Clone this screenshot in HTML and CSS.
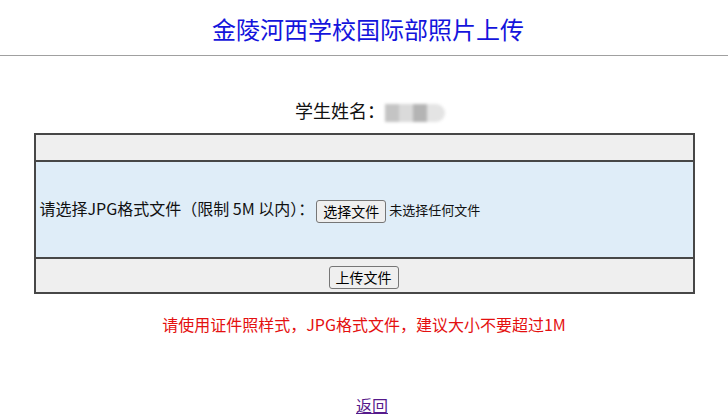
FILE: index.html
```html
<!DOCTYPE html>
<html>
  <head>
    <meta charset="utf-8">
    <title>金陵河西学校国际部照片上传</title>
    <link rel="stylesheet" href="styles.css">
  </head>
  <body>
    <h1 class="title">金陵河西学校国际部照片上传</h1>
    <hr class="rule">
    <p class="student">学生姓名：<span class="blur-name"><i></i><i></i><i></i><i></i></span></p>
    <form class="upload">
      <table class="upload-table">
        <tr class="row-gray"><td class="empty"></td></tr>
        <tr class="row-blue">
          <td class="pick">
            请选择JPG格式文件（限制 5M 以内）：<button type="button" class="btn">选择文件</button><span class="none">未选择任何文件</span>
          </td>
        </tr>
        <tr class="row-gray">
          <td class="submit"><button type="button" class="btn">上传文件</button></td>
        </tr>
      </table>
    </form>
    <p class="hint">请使用证件照样式，JPG格式文件，建议大小不要超过1M</p>
    <p class="back"><a href="#">返回</a></p>
  </body>
</html>
```

FILE: styles.css
```css
body {
  margin: 0;
  font-family: "Noto Sans CJK SC", "Liberation Sans", sans-serif;
  color: #111;
  background: #fff;
}

.title {
  margin: 0;
  padding: 13px 0 0 8px;
  height: 32px;
  line-height: 32px;
  font-size: 24px;
  font-weight: normal;
  text-align: center;
  color: #1414dc;
}

.rule {
  margin: 10px 0 0;
  border: 0;
  border-top: 1px solid #a0a0a0;
  height: 0;
}

.student {
  margin: 42px 0 0;
  height: 24px;
  line-height: 24px;
  font-size: 18px;
  text-align: center;
  padding-left: 12px;
}

.blur-name {
  display: inline-flex;
  vertical-align: middle;
  height: 18px;
  filter: blur(1.5px);
}

.blur-name i {
  display: block;
  width: 14px;
  height: 18px;
  background: #c4c4c4;
}

.blur-name i:nth-child(2) { background: #dadada; }
.blur-name i:nth-child(3) { background: #b4b4b4; }
.blur-name i:nth-child(4) { background: #e4e4e4; width: 18px; border-radius: 0 9px 9px 0; }

.upload {
  margin: 11px 0 0;
}

.upload-table {
  width: 661px;
  margin: 0 auto;
  border-collapse: collapse;
  border: 2px solid #474747;
}

.upload-table td {
  border: 2px solid #474747;
  padding: 0 4px;
  font-size: 16px;
}

.row-gray td {
  background: #efefef;
}

.row-blue td {
  background: #dfedf8;
}

.empty {
  height: 25px;
}

.pick {
  height: 95px;
}

.submit {
  height: 33px;
  text-align: center;
  padding-left: 12px;
}

.btn {
  font-family: "Noto Sans CJK SC", "Liberation Sans", sans-serif;
  font-size: 14px;
  height: 23px;
  padding: 0 6px;
  margin: 0 3px 0 2px;
  background: #efefef;
  border: 1px solid #767676;
  border-radius: 3px;
  color: #000;
  vertical-align: middle;
}

.none {
  font-size: 13px;
}

.hint {
  margin: 18px 0 0;
  text-align: center;
  font-size: 16px;
  color: #e41010;
}

.back {
  margin: 57px 0 0;
  text-align: center;
  font-size: 16px;
  padding-left: 16px;
}

.back a {
  color: #551a8b;
}
```
